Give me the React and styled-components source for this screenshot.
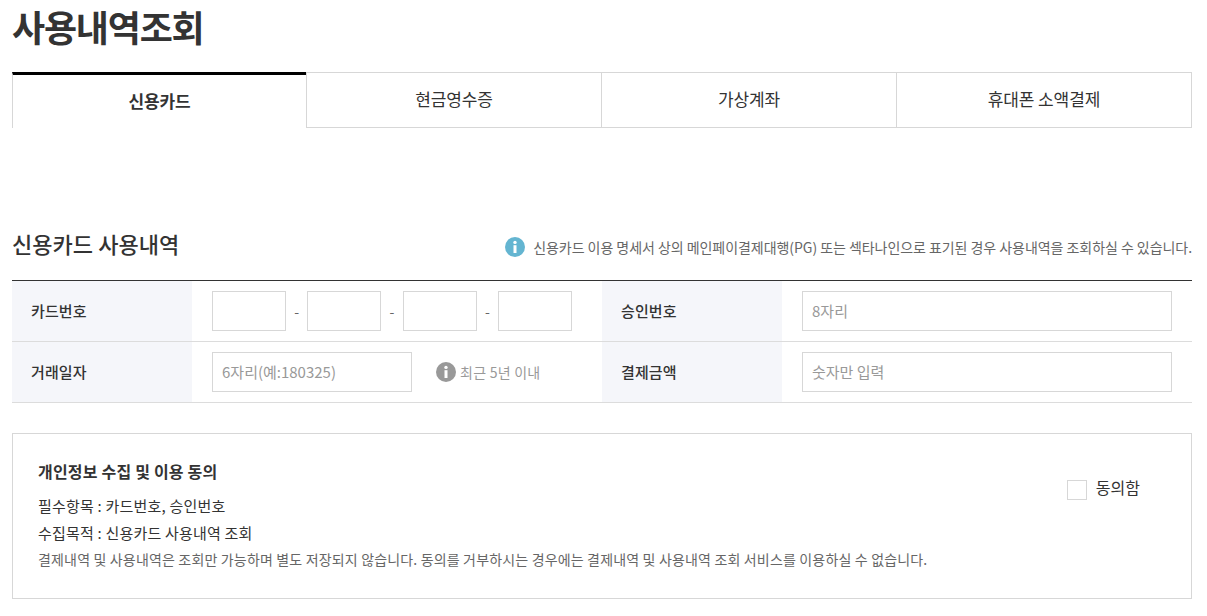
import styled, { createGlobalStyle } from "styled-components";

const GlobalStyle = createGlobalStyle`
  html, body {
    margin: 0;
    padding: 0;
    background: #fff;
  }
  body {
    font-family: "Noto Sans CJK KR", "Noto Sans", sans-serif;
    color: #333;
  }
  * {
    box-sizing: border-box;
  }
`;

const Container = styled.div`
  width: 1180px;
  margin-left: 12px;
  height: 616px;
  overflow: hidden;
`;

const Title = styled.h1`
  margin: 0;
  height: 72px;
  padding-top: 2px;
  font-size: 36px;
  line-height: 48px;
  font-weight: 700;
  letter-spacing: -1.2px;
  color: #333;
`;

const Tabs = styled.div`
  display: grid;
  grid-template-columns: 294px 296px 295px 295px;
  height: 56px;
`;

const Tab = styled.div`
  display: flex;
  align-items: center;
  justify-content: center;
  padding-bottom: 3px;
  font-size: 17px;
  letter-spacing: -0.1px;
  font-weight: ${(props) => (props.$active ? 700 : 400)};
  color: #333;
  border-top: ${(props) => (props.$active ? "3px solid #000" : "1px solid #d7d7d7")};
  border-right: ${(props) => (props.$active ? "none" : "1px solid #d7d7d7")};
  border-bottom: ${(props) => (props.$active ? "none" : "1px solid #d7d7d7")};
  border-left: ${(props) => (props.$active || props.$afterActive ? "1px solid #d7d7d7" : "none")};
`;

const SectionHead = styled.div`
  display: flex;
  align-items: center;
  justify-content: space-between;
  margin-top: 96px;
  height: 40px;
`;

const SectionTitle = styled.h2`
  margin: 0;
  padding-bottom: 2px;
  font-size: 22px;
  line-height: 32px;
  font-weight: 500;
  letter-spacing: 0.05px;
  color: #333;
`;

const Notice = styled.div`
  display: flex;
  align-items: center;
  gap: 8px;
  margin-top: 6px;
  font-size: 14px;
  letter-spacing: -0.05px;
  color: #666;
`;

const Table = styled.div`
  margin-top: 16px;
  border-top: 1px solid #333;
`;

const Row = styled.div`
  display: grid;
  grid-template-columns: 180px 410px 180px 410px;
  height: 61px;
  border-bottom: 1px solid #dcdcdc;
`;

const Label = styled.div`
  display: flex;
  align-items: center;
  padding-left: 19px;
  padding-bottom: 2px;
  background: #f5f6fa;
  font-size: 15px;
  letter-spacing: 0.1px;
  font-weight: 500;
  color: #333;
`;

const Cell = styled.div`
  display: flex;
  align-items: center;
  padding: 0 20px;
`;

const Field = styled.div`
  flex: ${(props) => (props.$wide ? "1" : "none")};
  width: ${(props) => props.$width || "74px"};
  height: 40px;
  display: flex;
  align-items: center;
  padding: 0 0 1px 9px;
  border: 1px solid #d7d7d7;
  background: #fff;
  font-size: 15px;
  color: #999;
`;

const Dash = styled.span`
  width: 21.33px;
  text-align: center;
  font-size: 14px;
  color: #666;
`;

const Hint = styled.div`
  display: flex;
  align-items: center;
  gap: 4px;
  margin-left: 24px;
  font-size: 14px;
  letter-spacing: 0.25px;
  color: #999;
`;

const Agreement = styled.div`
  display: flex;
  justify-content: space-between;
  margin-top: 30px;
  height: 166px;
  border: 1px solid #d7d7d7;
  padding: 24px 25px 0;
`;

const AgreementBody = styled.div`
  display: flex;
  flex-direction: column;
`;

const AgreementTitle = styled.div`
  font-size: 16px;
  line-height: 26px;
  letter-spacing: 0.2px;
  font-weight: 700;
  margin-bottom: 8px;
`;

const AgreementLine = styled.div`
  font-size: 15px;
  line-height: 27px;
  letter-spacing: 0.2px;
  color: #333;
`;

const AgreementNote = styled.div`
  font-size: 14px;
  line-height: 27px;
  letter-spacing: 0.165px;
  color: #666;
`;

const Consent = styled.label`
  display: flex;
  align-items: flex-start;
  gap: 9px;
  align-self: flex-start;
  margin-top: 17px;
  margin-right: 26px;
  font-size: 16px;
  color: #333;
`;

const CheckBox = styled.span`
  width: 20px;
  height: 20px;
  margin-top: 5px;
  border: 1px solid #d7d7d7;
  background: #fff;
`;

const InfoIcon = ({ color, size }) => (
  <svg width={size} height={size} viewBox="0 0 20 20">
    <circle cx="10" cy="10" r="10" fill={color} />
    <circle cx="10" cy="5.4" r="1.7" fill="#fff" />
    <rect x="8.5" y="8.2" width="3" height="7.8" fill="#fff" />
  </svg>
);

const tabs = ["신용카드", "현금영수증", "가상계좌", "휴대폰 소액결제"];

const App = () => {
  return (
    <Container>
      <GlobalStyle />
      <Title>사용내역조회</Title>
      <Tabs>
        {tabs.map((tab, i) => (
          <Tab key={tab} $active={i === 0} $afterActive={i === 1}>{tab}</Tab>
        ))}
      </Tabs>
      <SectionHead>
        <SectionTitle>신용카드 사용내역</SectionTitle>
        <Notice>
          <InfoIcon color="#64b5d1" size={20} />
          신용카드 이용 명세서 상의 메인페이결제대행(PG) 또는 섹타나인으로 표기된 경우 사용내역을 조회하실 수 있습니다.
        </Notice>
      </SectionHead>
      <Table>
        <Row>
          <Label>카드번호</Label>
          <Cell>
            <Field />
            <Dash>-</Dash>
            <Field />
            <Dash>-</Dash>
            <Field />
            <Dash>-</Dash>
            <Field />
          </Cell>
          <Label>승인번호</Label>
          <Cell>
            <Field $wide>8자리</Field>
          </Cell>
        </Row>
        <Row>
          <Label>거래일자</Label>
          <Cell>
            <Field $width="200px">6자리(예:180325)</Field>
            <Hint>
              <InfoIcon color="#999" size={20} />
              최근 5년 이내
            </Hint>
          </Cell>
          <Label>결제금액</Label>
          <Cell>
            <Field $wide>숫자만 입력</Field>
          </Cell>
        </Row>
      </Table>
      <Agreement>
        <AgreementBody>
          <AgreementTitle>개인정보 수집 및 이용 동의</AgreementTitle>
          <AgreementLine>필수항목 : 카드번호, 승인번호</AgreementLine>
          <AgreementLine>수집목적 : 신용카드 사용내역 조회</AgreementLine>
          <AgreementNote>결제내역 및 사용내역은 조회만 가능하며 별도 저장되지 않습니다. 동의를 거부하시는 경우에는 결제내역 및 사용내역 조회 서비스를 이용하실 수 없습니다.</AgreementNote>
        </AgreementBody>
        <Consent>
          <CheckBox />
          동의함
        </Consent>
      </Agreement>
    </Container>
  );
};

export default App;
